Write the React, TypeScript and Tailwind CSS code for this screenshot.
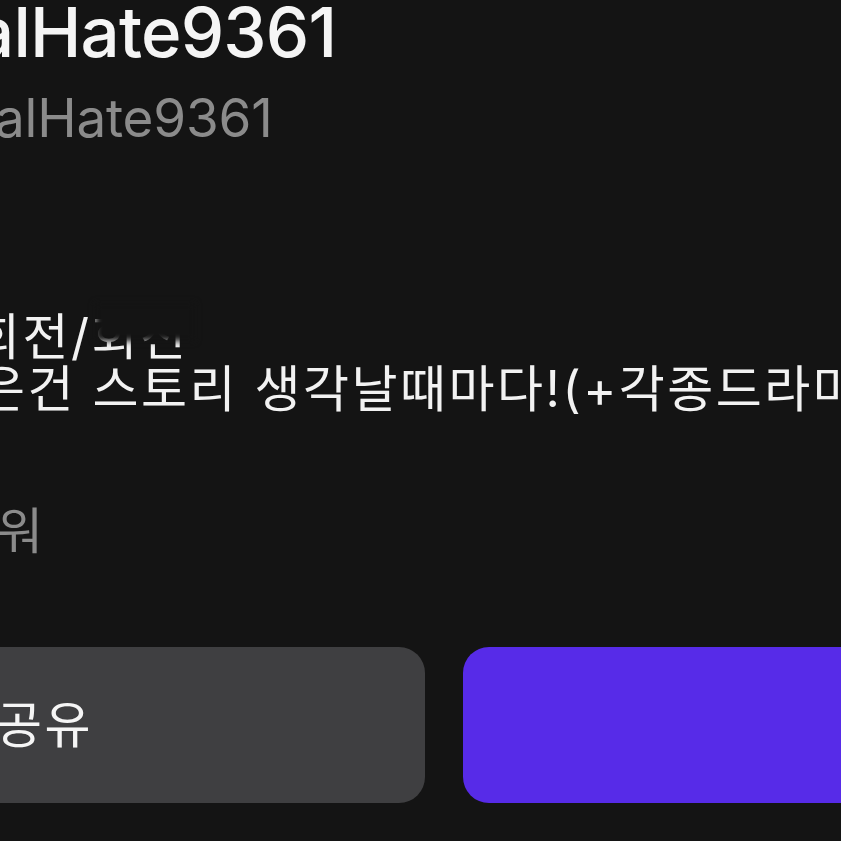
import React from "react";

const font = "font-['Inter','Noto_Sans_CJK_KR',sans-serif]";

export default function App() {
  return (
    <div className={`h-[841px] w-full overflow-hidden bg-[#141414] ${font}`}>
      <div className="flex flex-col">
        <div className="-ml-[25px] mt-[-2px] whitespace-nowrap text-[69px] leading-[69px] font-medium tracking-[-0.8px] text-[#f5f5f5]">
          alHate9361
        </div>
        <div className="-ml-[5px] mt-[25px] whitespace-nowrap text-[53px] leading-[53px] tracking-[-0.2px] text-[#8b8b8b]">
          alHate9361
        </div>

        <div className="relative mt-[166px] h-[52px]">
          <div className="-ml-[26px] whitespace-nowrap text-[50px] leading-[52px] tracking-[2.5px] text-[#f2f2f2]">
            회전/회전
          </div>
          <div className="absolute left-[95px] top-[-8px] h-[38px] w-[100px] bg-[#141414] blur-[3px]" />
        </div>
        <div className="-ml-[21px] whitespace-nowrap text-[50px] leading-[52px] tracking-[2.5px] text-[#f2f2f2]">
          은건 스토리 생각날때마다!(+각종드라마
        </div>

        <div className="-ml-[3px] mt-[90px] whitespace-nowrap text-[50px] leading-[52px] text-[#8b8b8b]">
          워
        </div>

        <div className="-ml-[60px] mt-[90px] flex gap-[38px]">
          <button className="flex h-[156px] w-[485px] shrink-0 items-center rounded-[26px] bg-[#3f3f41] pl-[56px] text-[50px] leading-none tracking-[2.5px] text-[#f5f5f5]">
            공유
          </button>
          <button className="h-[156px] w-[485px] shrink-0 rounded-[26px] bg-[#572be8]" />
        </div>
      </div>
    </div>
  );
}
